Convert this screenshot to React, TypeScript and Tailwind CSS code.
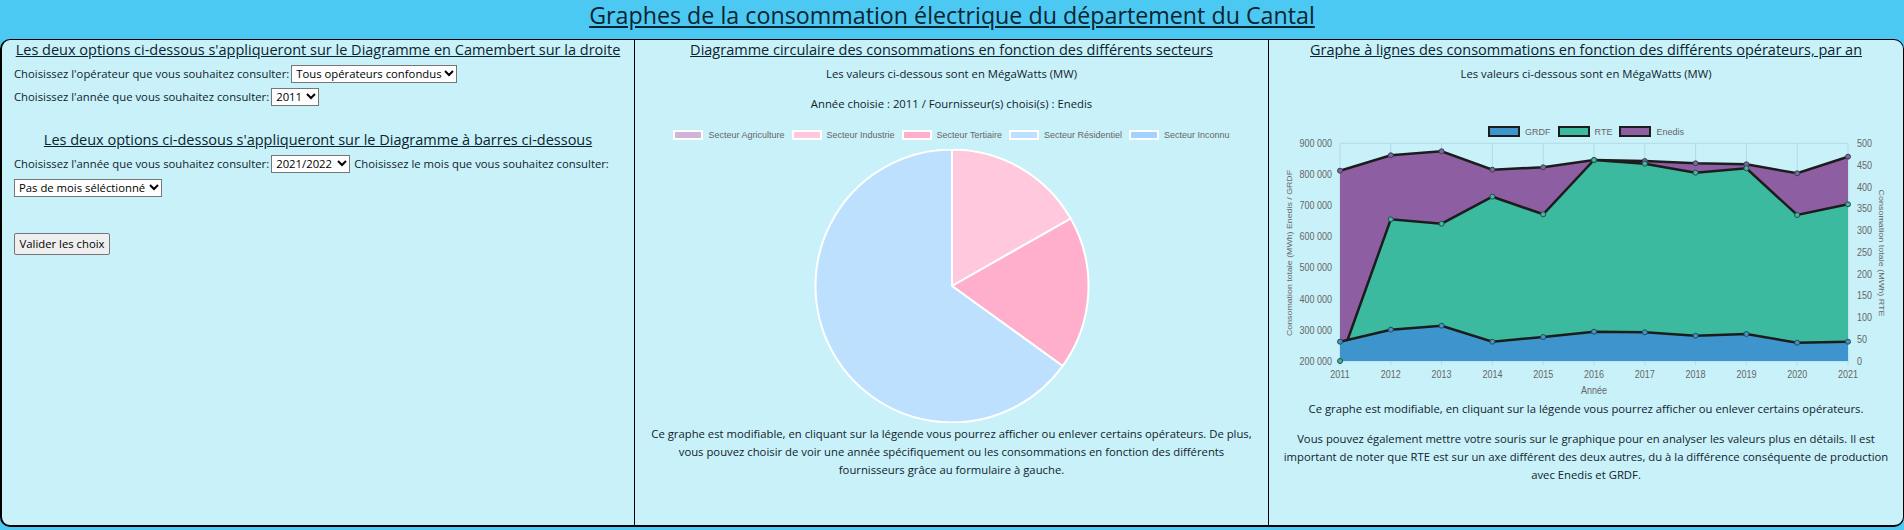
const font = "font-['Open_Sans',sans-serif]";

const years = [2011, 2012, 2013, 2014, 2015, 2016, 2017, 2018, 2019, 2020, 2021];

// y positions read from the chart, in page pixels
const enedis = [170.7, 155.3, 151.3, 169.7, 167.3, 160, 161, 163.3, 164.3, 173.3, 156.7];
const rte = [361, 219.3, 223.7, 196.7, 214.3, 160, 163.7, 172.7, 168.3, 215, 204.3];
const grdf = [341.7, 329.7, 325.7, 341.7, 337, 331.7, 332.3, 335.7, 334, 342.7, 341.7];

const PLOT_LEFT = 71;
const PLOT_RIGHT = 579;
const PLOT_BOTTOM = 222;
const TOP_OFFSET = 139;

const xAt = (i: number) => PLOT_LEFT + (i * (PLOT_RIGHT - PLOT_LEFT)) / 10;

function Series({ values, fill }: { values: number[]; fill: string }) {
  const pts = values.map((v, i) => `${xAt(i)},${v - TOP_OFFSET}`).join(" ");
  return (
    <>
      <polygon points={`${PLOT_LEFT},${PLOT_BOTTOM} ${pts} ${PLOT_RIGHT},${PLOT_BOTTOM}`} fill={fill} />
      <polyline points={pts} fill="none" stroke="#1c1c1c" strokeWidth="2.5" />
    </>
  );
}

function Dots({ values, fill }: { values: number[]; fill: string }) {
  return (
    <>
      {values.map((v, i) => (
        <circle key={i} cx={xAt(i)} cy={v - TOP_OFFSET} r="2.5" fill={fill} stroke="#2a4a4a" strokeWidth="1" />
      ))}
    </>
  );
}

// the original canvas is squeezed sideways, so the labels are too
function Tick({ x, y, anchor, children }: { x: number; y: number; anchor?: "end" | "middle"; children: React.ReactNode }) {
  return (
    <text transform={`translate(${x},${y}) scale(0.9,1)`} textAnchor={anchor}>
      {children}
    </text>
  );
}

function LineChart() {
  const left = ["900 000", "800 000", "700 000", "600 000", "500 000", "400 000", "300 000", "200 000"];
  const right = ["500", "450", "400", "350", "300", "250", "200", "150", "100", "50", "0"];
  const tickFont = "'Liberation Sans', sans-serif";
  return (
    <svg width="634" height="260" className="block">
      {left.map((_, i) => {
        const y = 4.3 + (i * 217.7) / 7;
        return <line key={i} x1={PLOT_LEFT} x2={PLOT_RIGHT} y1={y} y2={y} stroke="#b3dbe4" />;
      })}
      {years.map((_, i) => (
        <line key={i} x1={xAt(i)} x2={xAt(i)} y1="4" y2="226" stroke="#b3dbe4" />
      ))}
      <Series values={enedis} fill="#8e5ea2" />
      <Series values={rte} fill="#3cba9f" />
      <Series values={grdf} fill="#3e95cd" />
      <Dots values={enedis} fill="#8e5ea2" />
      <Dots values={rte} fill="#3cba9f" />
      <Dots values={grdf} fill="#3e95cd" />
      <g fill="#666666" fontSize="10" fontFamily={tickFont}>
        {left.map((t, i) => (
          <Tick key={t} x={63} y={8 + (i * 217.7) / 7} anchor="end">{t}</Tick>
        ))}
        {right.map((t, i) => (
          <Tick key={t} x={588} y={8 + (i * 217.7) / 10}>{t}</Tick>
        ))}
        {years.map((t, i) => (
          <Tick key={t} x={xAt(i)} y={239} anchor="middle">{t}</Tick>
        ))}
        <Tick x={325} y={255} anchor="middle">Année</Tick>
        <text transform="translate(23,114) rotate(-90) scale(1,0.9)" textAnchor="middle" fontSize="8.8">Consomation totale (MWh) Enedis / GRDF</text>
        <text transform="translate(610,114) rotate(90) scale(1,0.9)" textAnchor="middle" fontSize="9">Consomation totale (MWh) RTE</text>
      </g>
    </svg>
  );
}

function slice(from: number, to: number) {
  const cx = 138;
  const cy = 137;
  const r = 136.5;
  const p = (a: number) => {
    const rad = ((a - 90) * Math.PI) / 180;
    return `${cx + r * Math.cos(rad)} ${cy + r * Math.sin(rad)}`;
  };
  return `M${cx} ${cy} L${p(from)} A${r} ${r} 0 ${to - from > 180 ? 1 : 0} 1 ${p(to)} Z`;
}

function PieChart() {
  return (
    <svg width="276" height="274" className="block">
      <path d={slice(0, 60.4)} fill="#ffc8dd" stroke="#fff" strokeWidth="2" />
      <path d={slice(60.4, 125.9)} fill="#ffafcc" stroke="#fff" strokeWidth="2" />
      <path d={slice(125.9, 360)} fill="#bde0fe" stroke="#fff" strokeWidth="2" />
    </svg>
  );
}

function Legend({ items, dark }: { items: { label: string; color: string }[]; dark?: boolean }) {
  return (
    <div className="flex justify-center gap-[7px] font-['Liberation_Sans',sans-serif] text-[9px] leading-[10px] text-[#666666]">
      {items.map((it) => (
        <div key={it.label} className="flex items-center gap-[5px]">
          <span
            className={dark ? "h-[11px] w-[32px] border-2 border-[#1c1c1c]" : "h-[10px] w-[30px] border-2 border-white"}
            style={{ backgroundColor: it.color }}
          />
          {it.label}
        </div>
      ))}
    </div>
  );
}

function Select({ label, className }: { label: string; className: string }) {
  return (
    <div className={`relative h-[18px] shrink-0 ${className}`}>
      <select className="block h-full w-full appearance-none border border-[#767676] bg-white pl-[4px] text-[11.3px] leading-[16px] text-black">
        <option>{label}</option>
      </select>
      <svg width="10" height="7" viewBox="0 0 10 7" className="absolute right-[3px] top-[5px]">
        <polyline points="1,1 5,5 9,1" fill="none" stroke="#000" strokeWidth="2" />
      </svg>
    </div>
  );
}

const heading = "text-center text-[14.5px] leading-[20px] underline text-[#0b2530] whitespace-nowrap";
const row = "flex h-[18px] items-center gap-[2px] whitespace-nowrap";

export default function App() {
  return (
    <div className={`${font} flex h-[530px] w-[1904px] flex-col overflow-hidden bg-[#4bc9f3] text-[11.3px] leading-[18px] text-[#10232b]`}>
      <h1 className="h-[39px] text-center text-[23.25px] font-medium leading-[30px] underline text-[#0b2530]">
        Graphes de la consommation électrique du département du Cantal
      </h1>
      <div className="grid h-[488px] grid-cols-[633px_634px_1fr] overflow-hidden rounded-[10px] border-t border-r border-b-2 border-l-2 border-black bg-[#c9f1f9]">
        <section className="border-r border-black pl-[12px]">
          <h2 className={`${heading} pr-[12px]`}>Les deux options ci-dessous s'appliqueront sur le Diagramme en Camembert sur la droite</h2>
          <div className={`${row} mt-[5px]`}>
            Choisissez l'opérateur que vous souhaitez consulter:
            <Select label="Tous opérateurs confondus" className="w-[166px]" />
          </div>
          <div className={`${row} mt-[5px]`}>
            Choisissez l'année que vous souhaitez consulter:
            <Select label="2011" className="w-[48px]" />
          </div>
          <h2 className={`${heading} mt-[24px] pr-[12px]`}>Les deux options ci-dessous s'appliqueront sur le Diagramme à barres ci-dessous</h2>
          <div className={`${row} mt-[5px]`}>
            Choisissez l'année que vous souhaitez consulter:
            <Select label="2021/2022" className="w-[79px]" />
            <span className="ml-[2px]">Choisissez le mois que vous souhaitez consulter:</span>
          </div>
          <Select label="Pas de mois séléctionné" className="mt-[6px] w-[148px]" />
          <button className="mt-[36px] block h-[22px] w-[96px] rounded-[2px] border border-[#767676] bg-[#efefef] text-[11.3px] text-black">
            Valider les choix
          </button>
        </section>

        <section className="flex flex-col items-center border-r border-black text-center">
          <h2 className={heading}>Diagramme circulaire des consommations en fonction des différents secteurs</h2>
          <p className="mt-[5px]">Les valeurs ci-dessous sont en MégaWatts (MW)</p>
          <p className="mt-[12px]">Année choisie : 2011 / Fournisseur(s) choisi(s) : Enedis</p>
          <div className="mt-[17px]">
            <Legend
              items={[
                { label: "Secteur Agriculture", color: "#cdb4db" },
                { label: "Secteur Industrie", color: "#ffc8dd" },
                { label: "Secteur Tertiaire", color: "#ffafcc" },
                { label: "Secteur Résidentiel", color: "#bde0fe" },
                { label: "Secteur Inconnu", color: "#a2d2ff" },
              ]}
            />
          </div>
          <div className="mt-[9px]">
            <PieChart />
          </div>
          <p className="mt-[2px] w-[612px]">
            Ce graphe est modifiable, en cliquant sur la légende vous pourrez afficher ou enlever certains opérateurs. De plus, vous pouvez choisir de voir une année spécifiquement ou les consommations en fonction des différents fournisseurs grâce au formulaire à gauche.
          </p>
        </section>

        <section className="flex flex-col items-center text-center">
          <h2 className={heading}>Graphe à lignes des consommations en fonction des différents opérateurs, par an</h2>
          <p className="mt-[5px]">Les valeurs ci-dessous sont en MégaWatts (MW)</p>
          <div className="mt-[43px] mb-[2px]">
            <Legend
              dark
              items={[
                { label: "GRDF", color: "#3e95cd" },
                { label: "RTE", color: "#3cba9f" },
                { label: "Enedis", color: "#8e5ea2" },
              ]}
            />
          </div>
          <LineChart />
          <p className="mt-[1px]">Ce graphe est modifiable, en cliquant sur la légende vous pourrez afficher ou enlever certains opérateurs.</p>
          <p className="mt-[12px] w-[622px]">
            Vous pouvez également mettre votre souris sur le graphique pour en analyser les valeurs plus en détails. Il est important de noter que RTE est sur un axe différent des deux autres, du à la différence conséquente de production avec Enedis et GRDF.
          </p>
        </section>
      </div>
    </div>
  );
}
